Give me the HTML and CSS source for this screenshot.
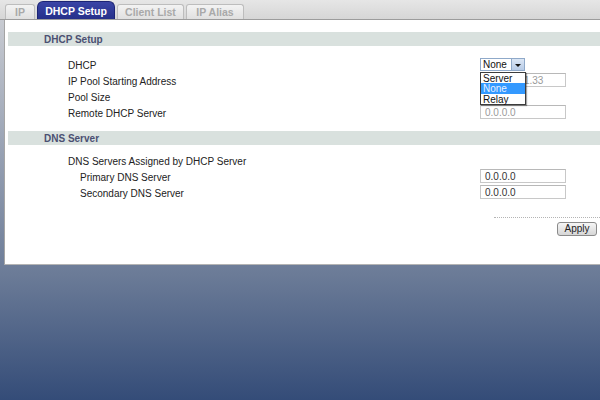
FILE: index.html
```html
<!DOCTYPE html>
<html>
<head>
<meta charset="utf-8">
<link rel="stylesheet" href="styles.css">
</head>
<body>
<div class="tabbar">
  <div class="tab tab-ip">IP</div>
  <div class="tab tab-active">DHCP Setup</div>
  <div class="tab tab-client">Client List</div>
  <div class="tab tab-alias">IP Alias</div>
</div>
<div class="panel">
  <div class="section-head">DHCP Setup</div>
  <div class="form">
    <div class="label">DHCP</div>
    <div class="control select-wrap">
      <div class="select"><span class="select-value">None</span><span class="select-btn"><span class="arrow"></span></span></div>
      <div class="dropdown">
        <div class="opt">Server</div>
        <div class="opt opt-sel">None</div>
        <div class="opt">Relay</div>
      </div>
    </div>
    <div class="label">IP Pool Starting Address</div>
    <div class="control"><div class="input input-dim">192.168.1.33</div></div>
    <div class="label">Pool Size</div>
    <div class="control"></div>
    <div class="label">Remote DHCP Server</div>
    <div class="control"><div class="input input-dim">0.0.0.0</div></div>
  </div>
  <div class="section-head section-dns">DNS Server</div>
  <div class="form form-dns">
    <div class="label">DNS Servers Assigned by DHCP Server</div>
    <div class="control"></div>
    <div class="label label-indent">Primary DNS Server</div>
    <div class="control"><div class="input">0.0.0.0</div></div>
    <div class="label label-indent">Secondary DNS Server</div>
    <div class="control"><div class="input">0.0.0.0</div></div>
  </div>
  <div class="divider"></div>
  <div class="actions"><button class="btn">Apply</button></div>
</div>
</body>
</html>
```

FILE: styles.css
```css
html, body {
  margin: 0;
  padding: 0;
  height: 400px;
  overflow: hidden;
}
body {
  background: linear-gradient(to bottom, #cfd1d6 0px, #6b7b97 275px, #344c78 400px);
  font-family: "Liberation Sans", Arial, sans-serif;
  font-size: 10px;
  color: #222;
}
.tabbar {
  display: flex;
  align-items: flex-end;
  gap: 2px;
  height: 19px;
  padding-left: 5px;
  background: linear-gradient(to bottom, #e6e6e6, #d6d6d6);
  border-bottom: 1px solid #9c9c9c;
}
.tab {
  box-sizing: border-box;
  height: 15px;
  line-height: 14px;
  text-align: center;
  font-weight: bold;
  font-size: 10.5px;
  color: #a9a9a9;
  background: linear-gradient(to bottom, #f3f3f3, #e0e0e0);
  border: 1px solid #bdbdbd;
  border-bottom: none;
  border-radius: 3px 3px 0 0;
}
.tab-ip { width: 30px; }
.tab-client { width: 67px; }
.tab-alias { width: 58px; }
.tab-active {
  width: 78px;
  height: 18px;
  line-height: 18px;
  color: #fff;
  background: linear-gradient(to bottom, #3a45a6, #25308a);
  border-color: #1c2475;
  border-radius: 6px 6px 0 0;
}
.panel {
  margin-left: 4px;
  border-left: 1px solid #a4a4a4;
  border-bottom: 1px solid #b4b4b4;
  background: #fff;
  height: 232px;
  padding-top: 12px;
}
.section-head {
  margin-left: 3px;
  height: 14px;
  line-height: 15px;
  padding-left: 36px;
  background: #d9e1de;
  font-weight: bold;
  color: #4b5072;
}
.section-dns {
  margin-top: 10px;
}
.form {
  display: grid;
  grid-template-columns: 412px 86px;
  grid-auto-rows: 16px;
  padding-left: 63px;
  margin-top: 11px;
}
.form-dns {
  margin-top: 8px;
}
.label {
  line-height: 18px;
  color: #222;
  white-space: nowrap;
}
.label-indent {
  padding-left: 12px;
}
.control {
  position: relative;
}
.input {
  box-sizing: border-box;
  width: 86px;
  height: 14px;
  line-height: 14px;
  padding-left: 4px;
  border: 1px solid #c8c8c8;
  border-top-color: #b8b8b8;
  background: #fff;
  color: #333;
}
.input-dim {
  color: #9a9a9a;
}
.select {
  box-sizing: border-box;
  margin-top: 1px;
  width: 45px;
  height: 13px;
  border: 1px solid #8fa9c9;
  background: #fff;
  display: flex;
  color: #111;
}
.select-value {
  flex: 1;
  line-height: 12px;
  padding-left: 2px;
}
.select-btn {
  width: 12px;
  border-left: 1px solid #8fa9c9;
  background: linear-gradient(to bottom, #dbe6f5, #b7cbe6);
  display: flex;
  align-items: center;
  justify-content: center;
}
.arrow {
  width: 0;
  height: 0;
  border-left: 3px solid transparent;
  border-right: 3px solid transparent;
  border-top: 3px solid #111;
  margin-top: 1px;
}
.dropdown {
  position: absolute;
  top: 15px;
  left: 0;
  box-sizing: border-box;
  width: 46px;
  height: 33px;
  border: 1px solid #3c3c3c;
  background: #fff;
  box-shadow: 1px 1px 1px rgba(0,0,0,0.35);
  z-index: 2;
}
.opt {
  height: 10.33px;
  line-height: 11px;
  padding-left: 2px;
  color: #111;
}
.opt-sel {
  background: #3399ff;
  color: #e8f2ff;
}
.divider {
  margin-top: 16px;
  margin-left: 489px;
  border-top: 1px dotted #b4b4b4;
}
.actions {
  margin-top: 4px;
  display: flex;
  justify-content: flex-end;
  padding-right: 3px;
}
.btn {
  box-sizing: border-box;
  width: 40px;
  height: 14px;
  padding: 0;
  font-family: "Liberation Sans", Arial, sans-serif;
  font-size: 10px;
  line-height: 12px;
  color: #222;
  background: linear-gradient(to bottom, #f6f6f6, #d6d6d6);
  border: 1px solid #8a8a8a;
  border-radius: 3px;
}
```
